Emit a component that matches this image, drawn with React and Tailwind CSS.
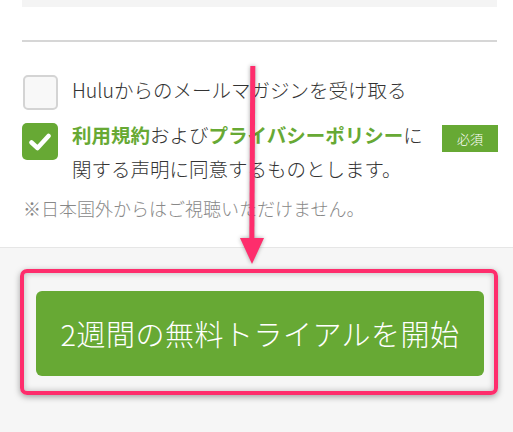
import React from 'react';

const font = { fontFamily: '"Noto Sans CJK JP", "Noto Sans", sans-serif' };

function CheckIcon() {
    return (
        <svg width="22" height="18" viewBox="0 0 22 18" fill="none">
            <path d="M2.5 9.5 L8.5 15 L19.5 3" stroke="white" strokeWidth="4.5" strokeLinecap="round" strokeLinejoin="round" />
        </svg>
    );
}

export default function App() {
    return (
        <div className="relative w-[513px] h-[432px] overflow-hidden bg-white text-[#333]" style={font}>
            <div className="flex flex-col h-[247px]">
                <div className="ml-[22px] mr-[16px] h-[7px] bg-[#f4f4f4]" />
                <div className="ml-[22px] mr-[16px] mt-[33px] h-[2px] bg-[#d6d6d6]" />

                <div className="ml-[23px] mt-[33px] flex items-center">
                    <div className="w-[35px] h-[35px] rounded-[5px] border-2 border-[#d4d4d4] bg-[#f8f8f8]" />
                    <span className="ml-[14px] -mt-[5px] text-[19.5px] leading-[24px] font-light">Huluからのメールマガジンを受け取る</span>
                </div>

                <div className="ml-[22px] mr-[15px] mt-[13px] flex items-start">
                    <div className="w-[36px] h-[37px] rounded-[5px] bg-[#67a934] flex items-center justify-center">
                        <CheckIcon />
                    </div>
                    <p className="ml-[14px] -mt-[5px] flex-1 text-[19.5px] leading-[34px] font-light">
                        <span className="text-[#67a934] font-bold">利用規約</span>および<span className="text-[#67a934] font-bold">プライバシーポリシー</span>に
                        <br />関する声明に同意するものとします。
                    </p>
                    <div className="mt-[2px] w-[56px] h-[27px] bg-[#67a934] text-white text-[13px] font-light flex items-center justify-center">必須</div>
                </div>

                <p className="ml-[23px] mt-[10px] text-[18px] leading-[24px] text-[#888] font-light">※日本国外からはご視聴いただけません。</p>
            </div>

            <div className="h-[185px] bg-[#f6f6f6] border-t border-[#e6e6e6] pt-[43px]">
                <button className="ml-[36px] w-[448px] h-[85px] rounded-[6px] bg-[#67a934] text-white text-[29px] font-light tracking-[0.5px] flex items-center justify-center">
                    2週間の無料トライアルを開始
                </button>
            </div>

            {/* annotation overlay */}
            <div className="absolute left-[20px] top-[269px] w-[478px] h-[126px] rounded-[7px] border-4 border-[#fe2d6c] shadow-[0_2px_6px_rgba(0,0,0,0.35),inset_0_0_6px_rgba(0,0,0,0.25)]" />
            <svg className="absolute left-0 top-0 drop-shadow-[0_0_2px_rgba(0,0,0,0.35)]" width="513" height="432" viewBox="0 0 513 432">
                <line x1="252.8" y1="66" x2="251.8" y2="246" stroke="#fe2d6c" strokeWidth="5" />
                <polygon points="240,238 264,238 252,264" fill="#fe2d6c" />
            </svg>
        </div>
    );
}
